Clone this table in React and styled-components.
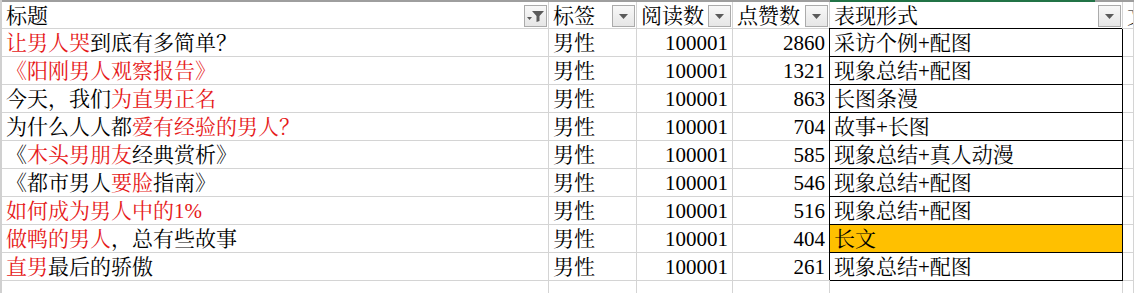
import React from "react";
import styled, { createGlobalStyle } from "styled-components";

const GlobalStyle = createGlobalStyle`
  html, body {
    margin: 0;
    padding: 0;
    background: #ffffff;
  }
  body {
    font-family: "Liberation Serif", "Noto Serif CJK SC", "Noto Sans CJK SC", serif;
  }
`;

const cols = "547px 88px 96px 97px 293px 1fr";

const headers = [
  { text: "标题", filtered: true },
  { text: "标签" },
  { text: "阅读数" },
  { text: "点赞数" },
  { text: "表现形式", selected: true },
  { text: "文案", noButton: true },
];

// each title is a list of [text, isRed]
const rows = [
  { title: [["让男人哭", true], ["到底有多简单？", false]], reads: 100001, likes: 2860, form: "采访个例+配图" },
  { title: [["《阳刚男人观察报告》", true]], reads: 100001, likes: 1321, form: "现象总结+配图" },
  { title: [["今天，我们", false], ["为直男正名", true]], reads: 100001, likes: 863, form: "长图条漫" },
  { title: [["为什么人人都", false], ["爱有经验的男人？", true]], reads: 100001, likes: 704, form: "故事+长图" },
  { title: [["《", false], ["木头男朋友", true], ["经典赏析》", false]], reads: 100001, likes: 585, form: "现象总结+真人动漫" },
  { title: [["《都市男人", false], ["要脸", true], ["指南》", false]], reads: 100001, likes: 546, form: "现象总结+配图" },
  { title: [["如何成为男人中的1%", true]], reads: 100001, likes: 516, form: "现象总结+配图" },
  { title: [["做鸭的男人", true], ["，总有些故事", false]], reads: 100001, likes: 404, form: "长文", fill: "#ffc000" },
  { title: [["直男", true], ["最后的骄傲", false]], reads: 100001, likes: 261, form: "现象总结+配图" },
];

function DropArrow() {
  return (
    <svg width="9" height="5" viewBox="0 0 9 5">
      <path d="M0 0 H9 L4.5 5 Z" fill="#5a5a5a" />
    </svg>
  );
}

function FunnelIcon() {
  return (
    <svg width="17" height="11" viewBox="0 0 17 11">
      <path d="M0 6 H5 L2.5 9 Z" fill="#5a5a5a" />
      <path d="M5 0 H17 L12.5 5 V10 L9.5 11 V5 Z" fill="#5a5a5a" />
    </svg>
  );
}

function App() {
  return (
    <>
      <GlobalStyle />
      <Sheet>
        <TopEdge>
          <Highlight />
        </TopEdge>
        <Grid>
          {headers.map((h, i) => (
            <HeaderCell key={`h${i}`}>
              <HeaderLabel>{h.text}</HeaderLabel>
              {!h.noButton && (
                <FilterButton>{h.filtered ? <FunnelIcon /> : <DropArrow />}</FilterButton>
              )}
            </HeaderCell>
          ))}
          {rows.map((r, i) => (
            <React.Fragment key={`r${i}`}>
              <Cell>
                {r.title.map(([t, red], j) => (
                  <Part key={j} $red={red}>
                    {t}
                  </Part>
                ))}
              </Cell>
              <Cell>男性</Cell>
              <Cell $num>{r.reads}</Cell>
              <Cell $num>{r.likes}</Cell>
              <Cell $boxed $fill={r.fill}>
                {r.form}
              </Cell>
              <Cell />
            </React.Fragment>
          ))}
          {headers.map((h, i) => (
            <Cell key={`e${i}`} />
          ))}
        </Grid>
      </Sheet>
    </>
  );
}

const Sheet = styled.div`
  width: 1134px;
  height: 293px;
  overflow: hidden;
  position: relative;
  border-left: 2px solid #d0d0d0;
  box-sizing: border-box;
`;

const TopEdge = styled.div`
  height: 2px;
  background: #9e9e9e;
  position: relative;
`;

const Highlight = styled.div`
  position: absolute;
  left: 828px;
  width: 265px;
  top: 0;
  height: 2px;
  background: #217346;
`;

const Grid = styled.div`
  display: grid;
  grid-template-columns: ${cols};
  grid-auto-rows: 28px;
  grid-template-rows: 27px;
`;

const Cell = styled.div`
  box-sizing: border-box;
  border-right: 1px solid ${(p) => (p.$boxed ? "#000" : "#d4d4d4")};
  border-bottom: 1px solid ${(p) => (p.$boxed ? "#000" : "#d4d4d4")};
  background: ${(p) => p.$fill || "#ffffff"};
  box-shadow: ${(p) => (p.$boxed ? "-1px -1px 0 #000" : "none")};
  font-size: 21px;
  line-height: 26px;
  padding: 1px 4px 0 4px;
  color: #000;
  white-space: nowrap;
  overflow: hidden;
  text-align: ${(p) => (p.$num ? "right" : "left")};
`;

const HeaderCell = styled.div`
  box-sizing: border-box;
  border-right: 1px solid #d4d4d4;
  border-bottom: 1px solid #d4d4d4;
  display: flex;
  align-items: flex-start;
  justify-content: space-between;
  padding: 0 1px 0 4px;
  overflow: hidden;
  white-space: nowrap;
`;

const HeaderLabel = styled.span`
  font-size: 21px;
  line-height: 26px;
  padding-top: 1px;
  color: #000;
`;

const FilterButton = styled.div`
  flex: none;
  box-sizing: border-box;
  width: 23px;
  height: 22px;
  margin-top: 3px;
  border: 1px solid #ababab;
  background: linear-gradient(#f8f8f8, #e6e6e6);
  display: flex;
  align-items: center;
  justify-content: center;
`;

const Part = styled.span`
  color: ${(p) => (p.$red ? "#e61919" : "#000")};
`;

export default App;
